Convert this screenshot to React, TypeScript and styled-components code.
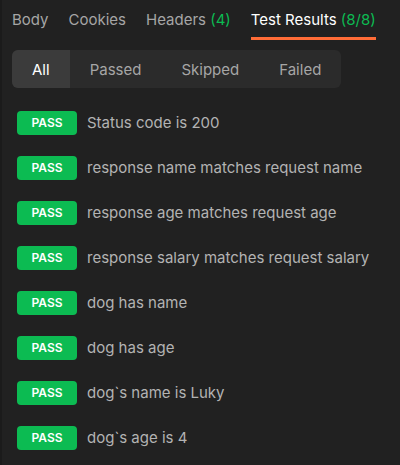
import React from "react";
import styled, { createGlobalStyle } from "styled-components";

const Global = createGlobalStyle`
  html, body { margin: 0; padding: 0; background: #212121; }
  body { font-family: Inter, "Noto Sans", sans-serif; }
`;

const Page = styled.div`
  width: 400px;
  height: 465px;
  background: #212121;
  border-left: 2px solid #1b1b1b;
  box-sizing: border-box;
  overflow: hidden;
`;

const TabBar = styled.div`
  display: flex;
  gap: 20px;
  padding: 0 10px;
`;

const Tab = styled.div<{ $active?: boolean }>`
  padding-top: 10px;
  padding-bottom: 7px;
  line-height: 20px;
  font-size: 15px;
  color: ${(p) => (p.$active ? "#ffffff" : "#a6a6a6")};
  border-bottom: 3px solid ${(p) => (p.$active ? "#ff6c37" : "transparent")};
  white-space: nowrap;
`;

const Count = styled.span`
  color: #0cbb52;
`;

const Segmented = styled.div`
  display: inline-flex;
  margin: 10px 0 0 10px;
  height: 38px;
  background: #2b2b2b;
  border-radius: 6px;
  overflow: hidden;
`;

const Segment = styled.div<{ $active?: boolean }>`
  display: flex;
  align-items: center;
  padding: 0 20px;
  font-size: 15px;
  color: ${(p) => (p.$active ? "#ffffff" : "#a6a6a6")};
  background: ${(p) => (p.$active ? "#3b3b3b" : "transparent")};
`;

const List = styled.div`
  display: flex;
  flex-direction: column;
  padding: 12px 15px 0;
`;

const Row = styled.div`
  display: flex;
  align-items: center;
  gap: 10px;
  height: 45px;
`;

const Badge = styled.span`
  display: flex;
  align-items: center;
  justify-content: center;
  width: 60px;
  height: 24px;
  border-radius: 4px;
  background: #0cbb52;
  color: #ffffff;
  font-size: 12px;
  font-weight: 600;
`;

const Name = styled.span`
  font-size: 15px;
  color: #b3b3b3;
  white-space: nowrap;
`;

const tests = [
  "Status code is 200",
  "response name matches request name",
  "response age matches request age",
  "response salary matches request salary",
  "dog has name",
  "dog has age",
  "dog`s name is Luky",
  "dog`s age is 4",
];

export default function App() {
  return (
    <Page>
      <Global />
      <TabBar>
        <Tab>Body</Tab>
        <Tab>Cookies</Tab>
        <Tab>
          Headers <Count>(4)</Count>
        </Tab>
        <Tab $active>
          Test Results <Count>(8/8)</Count>
        </Tab>
      </TabBar>
      <Segmented>
        <Segment $active>All</Segment>
        <Segment>Passed</Segment>
        <Segment>Skipped</Segment>
        <Segment>Failed</Segment>
      </Segmented>
      <List>
        {tests.map((t) => (
          <Row key={t}>
            <Badge>PASS</Badge>
            <Name>{t}</Name>
          </Row>
        ))}
      </List>
    </Page>
  );
}
